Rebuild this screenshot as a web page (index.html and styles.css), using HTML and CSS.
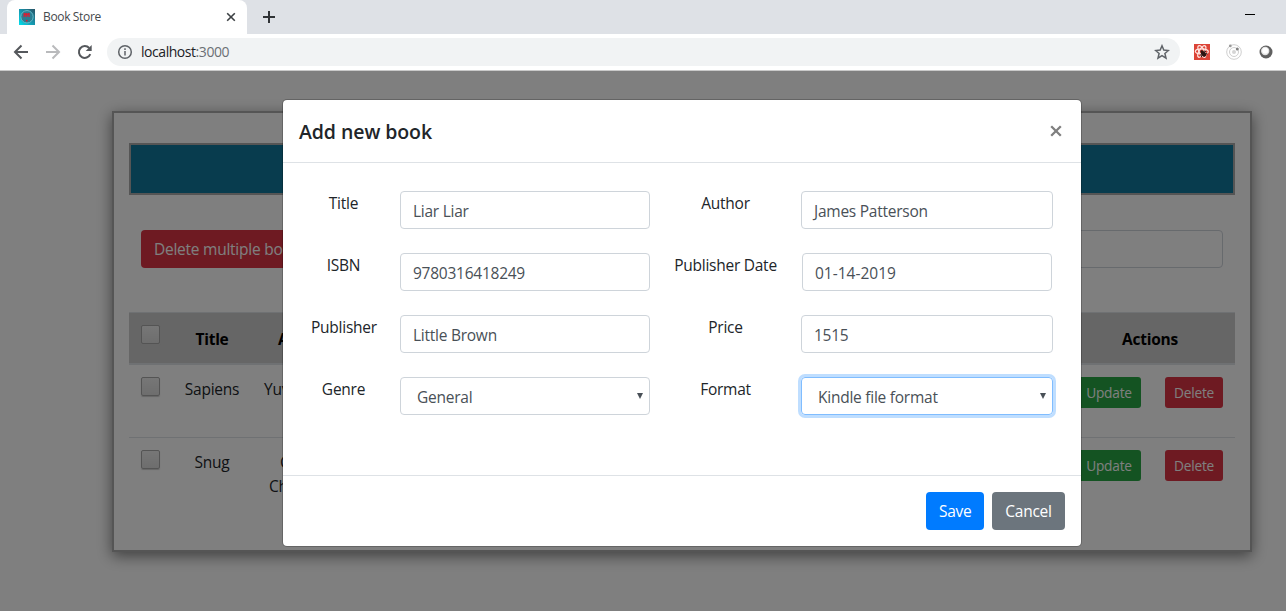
FILE: index.html
```html
<!DOCTYPE html>
<html lang="en">
<head>
<meta charset="utf-8">
<title>Book Store</title>
<link rel="stylesheet" href="styles.css">
</head>
<body>
<header class="browser">
  <div class="tabstrip">
    <div class="tab">
      <svg class="favicon" viewBox="0 0 16 16"><defs><linearGradient id="fav" x1="0" y1="1" x2="1" y2="0"><stop offset="0" stop-color="#00e0ee"/><stop offset=".5" stop-color="#1794ac"/><stop offset="1" stop-color="#2a5365"/></linearGradient></defs><rect width="16" height="16" fill="url(#fav)"/><circle cx="8" cy="7.8" r="6.2" fill="#2b7d91" stroke="#65b9c8" stroke-width="1"/><path d="M5.200 8V4M7.500 8V4M10 8V4M5.200 4.200l2.300 2.300L10 4.200" fill="none" stroke="#d71f35" stroke-width="1.300"/><circle cx="7.700" cy="11.700" r=".9" fill="#d71f35"/></svg>
      <span class="tab-title">Book Store</span>
      <svg class="tab-close" viewBox="0 0 10 10"><path d="M1.200 1.200l7.600 7.600M8.800 1.200L1.200 8.800"/></svg>
    </div>
    <svg class="tab-new" viewBox="0 0 12 12"><path d="M6 0v12M0 6h12"/></svg>
    <span class="minimize"></span>
  </div>
  <div class="toolbar">
    <svg class="nav" viewBox="0 0 16 16"><path d="M15 8H2M8.500 1.500L2 8l6.500 6.500"/></svg>
    <svg class="nav off" viewBox="0 0 16 16"><path d="M1 8h13M7.500 1.500L14 8l-6.500 6.500"/></svg>
    <svg class="nav" viewBox="0 0 16 16"><path d="M13.300 10.200A5.900 5.900 0 1 1 12.200 4"/><path d="M14.700 1v6H8.700z" class="solid"/></svg>
    <div class="omnibox">
      <svg class="info" viewBox="0 0 16 16"><circle cx="8" cy="8" r="6.300"/><path d="M8 7v4.500M8 4.200v1.700"/></svg>
      <span class="url">localhost<span class="port">:3000</span></span>
      <svg class="star" viewBox="0 0 16 16"><path d="M8 1.800l1.800 4.300 4.600.4-3.500 3 1.100 4.600-4-2.500-4 2.500 1.100-4.600-3.500-3 4.600-.4z"/></svg>
    </div>
    <svg class="ext" viewBox="0 0 16 16"><rect width="16" height="16" fill="#dc4437"/><g fill="none" stroke="#ffe3df" stroke-width="1.200"><ellipse cx="7.800" cy="7.500" rx="6.500" ry="2.600"/><ellipse cx="7.800" cy="7.500" rx="6.500" ry="2.600" transform="rotate(60 7.800 7.500)"/><ellipse cx="7.800" cy="7.500" rx="6.500" ry="2.600" transform="rotate(120 7.800 7.500)"/></g><ellipse cx="9.600" cy="10" rx="2.200" ry="3" transform="rotate(-40 9.600 10)" fill="#2b1512"/><circle cx="7.800" cy="7.600" r="1.300" fill="#2b1512"/><path d="M10 7l2 .5M6.800 10l.8 3M12 9.500l1.500.5" stroke="#2b1512"/></svg>
    <svg class="ext" viewBox="0 0 16 16"><g fill="none" stroke="#cfcfcf"><circle cx="8" cy="8" r="7.300"/><circle cx="8" cy="8" r="4.500"/></g><circle cx="8" cy="8" r="2" fill="#d5d5d5"/><circle cx="4.300" cy="1.900" r="1.400" fill="#999"/><circle cx="11.300" cy="5" r="1.500" fill="#808080"/></svg>
    <svg class="ext" viewBox="0 0 16 16"><circle cx="8" cy="8" r="6.500" fill="#606060"/><circle cx="7.200" cy="7" r="4.200" fill="#e2e2e2"/><circle cx="7.200" cy="6.800" r="3" fill="#fff"/></svg>
  </div>
</header>
<div class="page">
  <main class="card">
    <div class="banner"></div>
    <div class="actions"><button class="btn danger">Delete multiple books</button><input class="search" aria-label="Search"></div>
    <div class="table">
      <div class="tr head"><span class="check"></span><b class="c-title">Title</b><b class="c-author">Au</b><b class="c-actions">Actions</b></div>
      <div class="tr first"><span class="check"></span><span class="c-title">Sapiens</span><span class="c-author name">Yuval</span><span class="c-actions"><button class="btn sm success">Update</button><button class="btn sm danger">Delete</button></span></div>
      <div class="tr"><span class="check"></span><span class="c-title">Snug</span><span class="c-author"><span class="initial">C</span><br><span class="surname">Ch</span></span><span class="c-actions"><button class="btn sm success">Update</button><button class="btn sm danger">Delete</button></span></div>
    </div>
  </main>
  <div class="backdrop"></div>
  <section class="modal" role="dialog">
    <div class="modal-head"><h5>Add new book</h5><svg class="close" viewBox="0 0 12 12"><path d="M1.200 1.200l9.600 9.600M10.800 1.200l-9.600 9.600"/></svg></div>
    <div class="modal-body">
      <label>Title</label><div class="field">Liar Liar</div><label>Author</label><div class="field">James Patterson</div>
      <label>ISBN</label><div class="field">9780316418249</div><label>Publisher Date</label><div class="field date">01-14-2019</div>
      <label>Publisher</label><div class="field">Little Brown</div><label>Price</label><div class="field">1515</div>
      <label>Genre</label><div class="field select">General<i class="arrow"></i></div><label>Format</label><div class="field select focus">Kindle file format<i class="arrow"></i></div>
    </div>
    <div class="modal-foot"><button class="btn primary">Save</button><button class="btn secondary">Cancel</button></div>
  </section>
</div>
</body>
</html>
```
FILE: styles.css
```css
* { box-sizing: border-box; }
body { margin: 0; width: 1286px; height: 611px; overflow: hidden; background: #fff; color: #212529; font: 15.5px/24px "Open Sans", "Noto Sans", sans-serif; letter-spacing: -.25px; }
svg { flex: none; display: block; }

.browser { height: 71px; background: #dee1e6; border-bottom: 1px solid #c9c9c9; font-size: 12px; }
.tabstrip { height: 34px; display: flex; align-items: center; padding-left: 7px; }
.tab { width: 240px; height: 34px; display: flex; align-items: center; padding: 0 11px 0 12px; background: #fff; border-radius: 8px 8px 0 0; }
.favicon { width: 16px; height: 16px; }
.tab-title { flex: 1; margin-left: 8px; color: #45484c; letter-spacing: -.35px; }
.tab-close { width: 10px; height: 10px; fill: none; stroke: #3c4043; stroke-width: 1.600; }
.tab-new { width: 12px; height: 12px; margin-left: 16px; fill: none; stroke: #303336; stroke-width: 2; }
.minimize { width: 10px; height: 1px; margin: -5px 31px 0 auto; background: #000; }
.toolbar { height: 36px; background: #fff; display: flex; align-items: center; padding: 0 12px 0 13px; }
.nav { width: 16px; height: 16px; margin-right: 16px; fill: none; stroke: #55585c; stroke-width: 2; }
.nav:nth-child(3) { margin-right: 14px; }
.nav .solid { fill: #55585c; stroke: none; }
.nav.off { stroke: #b9babc; }
.omnibox { width: 1073px; height: 28px; margin-right: 14px; padding: 0 10px; border-radius: 14px; background: #f1f3f4; display: flex; align-items: center; }
.info, .star { width: 16px; height: 16px; fill: none; stroke: #5f6368; stroke-width: 1.500; }
.url { flex: 1; margin-left: 8px; font-size: 14px; letter-spacing: -.45px; color: #202124; }
.port { color: #6b6f74; }
.ext { width: 16px; height: 16px; margin-right: 16px; }
.ext:last-child { margin-right: 0; }

.page { position: relative; height: 540px; padding: 40px 34px 0 112px; overflow: hidden; }
.card { height: 441px; padding: 30px 15px; border: 2px solid #aaa; box-shadow: 0 4px 14px rgba(0,0,0,.5); }
.banner { height: 52px; background: #10789c; border: 2px solid #aaa; }
.actions { display: flex; justify-content: space-between; padding: 35px 12px 44px; }
.search { width: 250px; height: 38px; border: 1px solid #ced4da; border-radius: 4px; }
.table { text-align: center; }
.tr { height: 73px; display: flex; align-items: flex-start; padding: 12px 12px 0; border-top: 1px solid #dee2e6; }
.tr.head { height: 53px; background: #ccc; color: #000; border-bottom: 2px solid #dee2e6; }
.tr.first { border-top: 0; height: 72px; }
.tr.head b { padding-top: 2px; }
.check { width: 19px; height: 19px; border: 1px solid #a8a8a8; border-radius: 2px; background: linear-gradient(#eee, #dcdcdc); box-shadow: 0 1px 1px #ccc; }
.c-title { width: 84px; margin-left: 10px; }
.c-author { width: 44px; padding-left: 24px; text-align: left; }
.c-author.name { padding-left: 10px; }
.initial { margin-left: 2px; }
.surname { margin-left: -9px; }
.c-actions { width: 146px; margin-left: auto; }
span.c-actions { display: flex; justify-content: flex-end; gap: 24px; }

.btn { height: 38px; padding: 0 12px; border: 1px solid transparent; border-radius: 4px; color: #fff; font: inherit; letter-spacing: inherit; white-space: nowrap; }
.btn.sm { height: 31px; width: 58px; padding: 1px 0 0; font-size: 13.700px; letter-spacing: -.2px; border-radius: 3px; }
.btn.sm.success { width: 64px; }
.danger { background: #dc3545; }
.success { background: #28a745; }
.primary { width: 58px; background: #007bff; }
.secondary { width: 73px; background: #6c757d; }

.backdrop { position: absolute; inset: 0; background: rgba(0,0,0,.5); }
.modal { position: absolute; left: 282px; top: 28px; width: 800px; height: 448px; display: flex; flex-direction: column; background: #fff; background-clip: padding-box; border: 1px solid rgba(0,0,0,.2); border-radius: 5px; }
.modal-head { height: 63px; display: flex; align-items: center; justify-content: space-between; padding: 0 18px 0 16px; border-bottom: 1px solid #dee2e6; }
h5 { margin: 2px 0 0; font-size: 19.500px; font-weight: 600; letter-spacing: -.08px; }
.close { width: 12px; height: 12px; margin-right: 1px; fill: none; stroke: #7f7f7f; stroke-width: 2.300; }
.modal-body { flex: 1; display: grid; grid-template-columns: 89px 250px 151px 252px; grid-template-rows: repeat(4, 38px); row-gap: 24px; padding: 28px 28px 0; color: #212529; }
label { text-align: center; }
.modal-body label:nth-child(4n+1) { margin-right: 24px; margin-left: -24px; padding-left: 24px; }
.field { height: 38px; padding: 7px 12px 0; border: 1px solid #ced4da; border-radius: 4px; color: #495057; }
.field.date { margin: 0 1px; letter-spacing: 0; }
.select { position: relative; padding-left: 16px; }
.arrow { position: absolute; right: 6px; top: 15px; border: 3px solid transparent; border-top: 6px solid #495057; border-bottom: 0; }
.focus { border-color: #80bdff; box-shadow: 0 0 0 3px #bfdeff; }
.modal-foot { height: 71px; padding: 16px; display: flex; justify-content: flex-end; gap: 8px; border-top: 1px solid #dee2e6; }
```
